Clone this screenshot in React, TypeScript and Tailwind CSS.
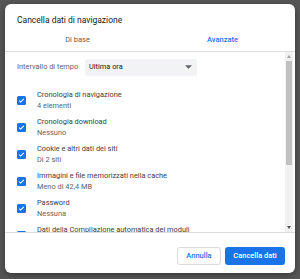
import React from "react";

const items = [
  { title: "Cronologia di navigazione", sub: "4 elementi" },
  { title: "Cronologia download", sub: "Nessuno" },
  { title: "Cookie e altri dati dei siti", sub: "Di 2 siti" },
  { title: "Immagini e file memorizzati nella cache", sub: "Meno di 42,4 MB" },
  { title: "Password", sub: "Nessuna" },
  { title: "Dati della Compilazione automatica dei moduli", sub: "\u00a0" },
];

function Check() {
  return (
    <div className="w-[9px] h-[9px] rounded-[1.5px] bg-[#1a73e8] flex items-center justify-center shrink-0">
      <svg width="7" height="7" viewBox="0 0 24 24">
        <path d="M4 12.5l5 5L20 6.5" fill="none" stroke="#fff" strokeWidth="3.5" />
      </svg>
    </div>
  );
}

export default function App() {
  return (
    <div
      className="w-[300px] h-[279px] bg-[#565656] pt-[4px] pl-[5px] overflow-hidden"
      style={{ fontFamily: "Roboto, 'Liberation Sans', sans-serif" }}
    >
      <div className="w-[290px] h-[269px] bg-white rounded-[6px] shadow-[0_2px_6px_rgba(0,0,0,0.35)] flex flex-col overflow-hidden">
        {/* Header */}
        <div className="h-[47px] shrink-0 flex flex-col">
          <div className="pl-[12px] pt-[11px] h-[27px] text-[8.5px] leading-[11px] text-[#202124]">
            Cancella dati di navigazione
          </div>
          <div className="flex h-[20px] text-[7.5px] leading-[10px]">
            <div className="flex-1 text-center text-[#5f6368] pt-[4px]">Di base</div>
            <div className="flex-1 text-center text-[#1a73e8] font-medium pt-[4px]">Avanzate</div>
          </div>
        </div>
        <div className="h-px bg-[#dadce0] shrink-0" />

        {/* Scroll area */}
        <div className="h-[180px] shrink-0 flex">
          <div className="flex-1 overflow-hidden pl-[12px] pr-[8px]">
            <div className="flex items-center h-[16px] mt-[7px]">
              <div className="w-[68px] text-[7.4px] text-[#5f6368]">Intervallo di tempo</div>
              <div className="w-[112px] h-[17px] bg-[#f1f3f4] rounded-[3px] flex items-center justify-between pl-[4px] pr-[5px]">
                <span className="text-[7.4px] text-[#202124]">Ultima ora</span>
                <svg width="7" height="4" viewBox="0 0 10 5">
                  <path d="M0 0h10L5 5z" fill="#5f6368" />
                </svg>
              </div>
            </div>
            <div className="mt-[12px] flex flex-col">
              {items.map((it) => (
                <div key={it.title} className="h-[27px] flex items-center">
                  <Check />
                  <div className="pl-[11px] flex flex-col">
                    <div className="text-[7.4px] leading-[10.5px] text-[#3c4043] whitespace-nowrap">{it.title}</div>
                    <div className="text-[7.4px] leading-[10.5px] text-[#5f6368] whitespace-nowrap">{it.sub}</div>
                  </div>
                </div>
              ))}
            </div>
          </div>
          {/* Scrollbar */}
          <div className="w-[8px] mr-[2px] bg-[#f1f1f1] flex flex-col items-center">
            <div className="h-[9px] flex items-center justify-center">
              <svg width="4" height="3" viewBox="0 0 4 3">
                <path d="M0 3L2 0l2 3z" fill="#a3a3a3" />
              </svg>
            </div>
            <div className="w-[6px] h-[104px] bg-[#c1c1c1]" />
            <div className="flex-1" />
            <div className="h-[9px] flex items-center justify-center">
              <svg width="4" height="3" viewBox="0 0 4 3">
                <path d="M0 0h4L2 3z" fill="#505050" />
              </svg>
            </div>
          </div>
        </div>
        <div className="h-px bg-[#dadce0] shrink-0" />

        {/* Footer */}
        <div className="flex-1 flex justify-end items-start pt-[14px] pr-[10px] gap-[4px]">
          <button className="w-[44px] h-[18px] border border-[#dadce0] rounded-[3px] text-[7.5px] font-medium text-[#1a73e8] bg-white">
            Annulla
          </button>
          <button className="w-[60px] h-[18px] rounded-[3px] text-[7.5px] font-medium text-white bg-[#1a73e8]">
            Cancella dati
          </button>
        </div>
      </div>
    </div>
  );
}
